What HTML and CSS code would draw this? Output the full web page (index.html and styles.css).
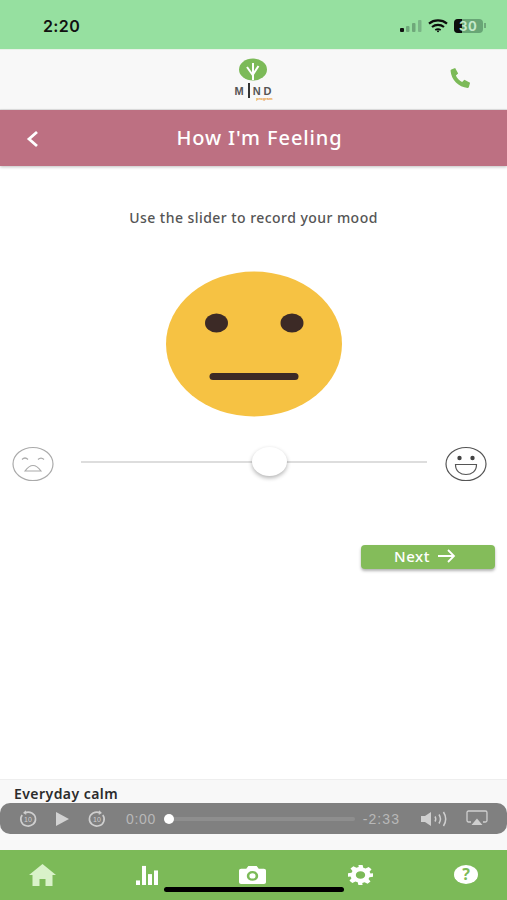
FILE: index.html
```html
<!DOCTYPE html>
<html lang="en">
<head>
    <meta charset="UTF-8">
    <meta name="viewport" content="width=device-width, initial-scale=1.0">
    <title>How I'm Feeling</title>
    <link rel="stylesheet" href="styles.css">
</head>
<body>
    <div class="status-bar">
        <span class="clock">2:20</span>
        <div class="status-icons">
            <svg width="22" height="12" viewBox="0 0 22 12">
                <rect x="0" y="8" width="4" height="4" rx="1" fill="#111"/>
                <rect x="6" y="6" width="3.500" height="6" rx="1" fill="#6fa87a"/>
                <rect x="12" y="3" width="3.500" height="9" rx="1" fill="#6fa87a"/>
                <rect x="18" y="0" width="3.500" height="12" rx="1" fill="#7ab586"/>
            </svg>
            <svg width="20" height="14" viewBox="0 0 20 14" fill="none" stroke="#0c0c0c" stroke-width="2.200">
                <path d="M1 4.600C6 .4 14 .4 19 4.600"/>
                <path d="M4 8C7.500 5.200 12.500 5.200 16 8"/>
                <path d="M7.300 11C9 9.800 11 9.800 12.700 11" stroke-width="1.800"/>
                <circle cx="10" cy="12.300" r="1" fill="#0c0c0c" stroke="none"/>
            </svg>
            <div class="battery-wrap">
                <div class="battery"><span class="battery-level"></span><span class="battery-text">30</span></div>
                <span class="battery-nub"></span>
            </div>
        </div>
    </div>

    <header class="app-bar">
        <div class="logo">
            <svg width="28" height="23" viewBox="0 0 28 23">
                <ellipse cx="14" cy="11.500" rx="14" ry="11" fill="#7cba58"/>
                <path d="M14 22V11M14 17.500L8 9M14 16.500L19.500 8M14 11V5" fill="none" stroke="#fff" stroke-width="2"/>
            </svg>
            <div class="logo-text">
                <div class="logo-word">M<span class="logo-i"></span>ND</div>
                <div class="logo-sub">program</div>
            </div>
        </div>
        <svg class="phone" width="24" height="22" viewBox="0 0 24 24">
            <path d="M2.500 2.800 6.700 1.200 10 7 7.500 9.300C8.800 12.400 11.300 15 14.300 16.400L16.800 14 23 17.200 21.700 21.800C21.500 22.500 21 22.800 20.300 22.800 10.500 22.400 2.500 14 1.700 4.200 1.700 3.500 2 3 2.500 2.800Z" fill="#7cba58"/>
        </svg>
    </header>

    <div class="title-bar">
        <svg class="back" width="13" height="18" viewBox="0 0 13 18" fill="none" stroke="#fff" stroke-width="2.800">
            <path d="M11 2 3 9l8 7"/>
        </svg>
        <h1>How I'm Feeling</h1>
    </div>

    <main>
        <p class="prompt">Use the slider to record your mood</p>

        <svg class="mood-face" width="176" height="146" viewBox="0 0 176 146">
            <ellipse cx="88" cy="73" rx="88" ry="72.500" fill="#f6c243"/>
            <ellipse cx="50.500" cy="52" rx="11.500" ry="9.500" fill="#3c2a26"/>
            <ellipse cx="126" cy="52" rx="11.500" ry="9.500" fill="#3c2a26"/>
            <rect x="43.500" y="102" width="89" height="7" rx="3.500" fill="#3c2a26"/>
        </svg>

        <div class="slider-row">
            <svg width="42" height="36" viewBox="0 0 42 36" fill="none" stroke="#aaa" stroke-width="1.200">
                <ellipse cx="21" cy="18" rx="20" ry="16.500"/>
                <path d="M10 13.500q3-3 6 0M26 13.500q3-3 6 0"/>
                <path d="M13 25q8-11 16 0z"/>
            </svg>
            <div class="slider">
                <div class="slider-track"></div>
                <div class="slider-thumb"></div>
            </div>
            <svg width="42" height="36" viewBox="0 0 42 36" fill="none" stroke="#555" stroke-width="1.200">
                <ellipse cx="21" cy="18" rx="20" ry="16.500"/>
                <circle cx="14.500" cy="12" r="2.200" fill="#444" stroke="none"/>
                <circle cx="27.500" cy="12" r="2.200" fill="#444" stroke="none"/>
                <path d="M10.500 18.500h21c0 7-5 10-10.500 10s-10.500-3-10.500-10z"/>
            </svg>
        </div>

        <div class="actions">
            <button class="next-btn" type="button">
                Next
                <svg width="19" height="14" viewBox="0 0 19 14" fill="none" stroke="#fff" stroke-width="1.800">
                    <path d="M1 7h16M11 1l6 6-6 6"/>
                </svg>
            </button>
        </div>
    </main>

    <section class="audio">
        <div class="audio-title">Everyday calm</div>
        <div class="player">
            <svg width="18" height="18" viewBox="0 0 18 18" fill="none" stroke="#cfcfcf" stroke-width="1.600">
                <path d="M6 2.800A7.400 7 0 1 1 3.200 5"/>
                <path d="M7 .8 5 2.800l2.300 1.400" stroke-width="1.200"/>
                <text x="9" y="12" class="skip-num">10</text>
            </svg>
            <svg class="play" width="15" height="16" viewBox="0 0 15 16"><path d="M1 1v14l13-7z" fill="#d2d2d2"/></svg>
            <svg width="18" height="18" viewBox="0 0 18 18" fill="none" stroke="#cfcfcf" stroke-width="1.600">
                <path d="M12 2.800A7.400 7 0 1 0 14.800 5"/>
                <path d="M11 .8 13 2.800l-2.300 1.400" stroke-width="1.200"/>
                <text x="9" y="12" class="skip-num">10</text>
            </svg>
            <span class="time time-start">0:00</span>
            <div class="progress"><span class="progress-knob"></span></div>
            <span class="time time-end">-2:33</span>
            <svg class="volume" width="28" height="16" viewBox="0 0 28 16" fill="none" stroke="#cfcfcf" stroke-width="1.500">
                <path d="M1 5h4l6-4v14l-6-4H1z" fill="#cfcfcf" stroke="none"/>
                <path d="M15 5.500q1.500 2.500 0 5M19 3.500q3 4.500 0 9M23.500 1q4.500 7 0 14"/>
            </svg>
            <svg class="airplay" width="22" height="17" viewBox="0 0 22 17" fill="none" stroke="#cfcfcf" stroke-width="1.300">
                <path d="M5 12H2.500a1.500 1.500 0 0 1-1.500-1.500V2.500A1.500 1.500 0 0 1 2.500 1h17A1.500 1.500 0 0 1 21 2.500v8a1.500 1.500 0 0 1-1.500 1.500H17"/>
                <path d="M11 8.500 16.500 15h-11z" fill="#cfcfcf" stroke="none"/>
            </svg>
        </div>
    </section>

    <nav class="tab-bar">
        <svg width="27" height="22" viewBox="0 0 27 22"><path d="M13.500 0 27 11h-3.500v11h-7v-7h-6v7h-7V11H0z" fill="#d9f2c9"/></svg>
        <svg class="tab-chart" width="22" height="20" viewBox="0 0 22 22" preserveAspectRatio="none" fill="#fff">
            <rect x="0" y="17" width="4" height="5"/><rect x="6" y="1" width="4" height="21"/>
            <rect x="12" y="10" width="4" height="12"/><rect x="18" y="6" width="4" height="16"/>
        </svg>
        <svg width="27" height="18" viewBox="0 0 26 20" preserveAspectRatio="none">
            <path fill-rule="evenodd" d="M2 3h5l2-3h8l2 3h5a2 2 0 0 1 2 2v13a2 2 0 0 1-2 2H2a2 2 0 0 1-2-2V5a2 2 0 0 1 2-2ZM13 5.500a5.500 5.500 0 1 0 0 11 5.500 5.500 0 0 0 0-11Zm0 2.500a3 3 0 1 1 0 6 3 3 0 0 1 0-6Z" fill="#fff"/>
        </svg>
        <svg width="25" height="20" viewBox="0 0 24 24" preserveAspectRatio="none">
            <path fill-rule="evenodd" d="M10 0h4l.7 3.400 2.200.9 2.900-1.900 2.800 2.800-1.900 2.900.9 2.200L24 10v4l-3.400.7-.9 2.200 1.900 2.900-2.800 2.800-2.900-1.900-2.200.9L14 24h-4l-.7-3.400-2.200-.9-2.900 1.900-2.800-2.800 1.900-2.900-.9-2.200L0 14v-4l3.400-.7.9-2.200-1.900-2.900 2.800-2.800 2.900 1.900 2.200-.9ZM12 7.500a4.500 4.500 0 1 0 0 9 4.500 4.500 0 0 0 0-9Z" fill="#fff"/>
        </svg>
        <div class="help">?</div>
    </nav>
    <div class="home-indicator"></div>
</body>
</html>
```

FILE: styles.css
```css
* {
    margin: 0;
    padding: 0;
    box-sizing: border-box;
}

body {
    width: 507px;
    height: 900px;
    overflow: hidden;
    position: relative;
    display: flex;
    flex-direction: column;
    font-family: 'Noto Sans', sans-serif;
    background-color: #fff;
    color: #333;
}

.status-bar {
    height: 49px;
    flex: none;
    background-color: #96e0a0;
    display: flex;
    justify-content: space-between;
    align-items: center;
    padding: 2px 21px 0 43px;
}

.clock {
    font-family: 'Inter', sans-serif;
    font-size: 16px;
    font-weight: 600;
    letter-spacing: 0.4px;
    color: #111;
}

.status-icons {
    display: flex;
    align-items: center;
    gap: 6px;
}

.battery-wrap {
    display: flex;
    align-items: center;
    gap: 1px;
}

.battery {
    width: 29px;
    height: 14px;
    border-radius: 4px;
    background-color: #68a676;
    position: relative;
    overflow: hidden;
}

.battery-level {
    display: block;
    width: 8px;
    height: 100%;
    background-color: #0c0c0c;
}

.battery-text {
    position: absolute;
    left: 5px;
    top: -1px;
    font-family: 'Inter', sans-serif;
    font-size: 13px;
    font-weight: 700;
    line-height: 16px;
    letter-spacing: 0.5px;
    color: #c3e9cb;
}

.battery-nub {
    width: 2px;
    height: 5px;
    background-color: #6fa87a;
}

.app-bar {
    height: 61px;
    flex: none;
    background-color: #f8f8f8;
    border-top: 1px solid #e8f2e8;
    border-bottom: 1px solid #e4e4e4;
    display: flex;
    justify-content: center;
    align-items: center;
    position: relative;
}

.logo {
    display: flex;
    flex-direction: column;
    align-items: center;
    margin-right: 2px;
    margin-top: -1px;
}

.logo-text {
    display: flex;
    flex-direction: column;
    margin-top: 5px;
    margin-left: 4px;
}

.logo-word {
    display: flex;
    align-items: center;
    font-family: 'Liberation Sans', sans-serif;
    font-size: 11px;
    font-weight: 700;
    line-height: 11px;
    letter-spacing: 3px;
    color: #555;
}

.logo-i {
    width: 2px;
    height: 15px;
    margin: -3px 3px -1px 1px;
    background-color: #333;
}

.logo-sub {
    font-family: 'Liberation Sans', sans-serif;
    font-size: 4px;
    font-weight: 700;
    line-height: 3px;
    text-align: right;
    padding-right: 2px;
    color: #e8962e;
}

.phone {
    position: absolute;
    right: 35px;
    top: 17px;
}

.title-bar {
    height: 56px;
    flex: none;
    background-color: #bd7082;
    box-shadow: 0 1px 3px rgba(0, 0, 0, 0.25);
    display: flex;
    justify-content: center;
    align-items: center;
    position: relative;
}

.title-bar h1 {
    font-size: 20px;
    font-weight: 500;
    letter-spacing: 0.9px;
    color: #fff;
    margin-left: 12px;
    margin-top: -2px;
}

.back {
    position: absolute;
    left: 26px;
    top: 20px;
}

main {
    flex: 1;
    display: flex;
    flex-direction: column;
    align-items: center;
}

.prompt {
    margin-top: 42px;
    font-size: 14px;
    font-weight: 500;
    line-height: 19px;
    letter-spacing: 0.45px;
    color: #555;
}

.mood-face {
    margin-top: 44px;
}

.slider-row {
    width: 100%;
    margin-top: 29px;
    padding: 0 20px 0 12px;
    display: flex;
    align-items: center;
    justify-content: space-between;
}

.slider {
    width: 346px;
    height: 36px;
    position: relative;
    margin-top: -2px;
    margin-left: 9px;
}

.slider-track {
    position: absolute;
    left: 0;
    right: 0;
    top: 16px;
    height: 2px;
    background-color: #ddd;
}

.slider-thumb {
    position: absolute;
    left: 171px;
    top: 2px;
    width: 35px;
    height: 29px;
    border-radius: 50%;
    background-color: #fff;
    box-shadow: 0 2px 4px rgba(0, 0, 0, 0.3);
}

.actions {
    width: 100%;
    margin-top: 63px;
    padding-right: 12px;
    display: flex;
    justify-content: flex-end;
}

.next-btn {
    width: 134px;
    height: 24px;
    border: none;
    border-radius: 4px;
    background-color: #84bc5a;
    box-shadow: 0 2px 3px rgba(0, 0, 0, 0.3);
    color: #fff;
    font-family: 'Noto Sans', sans-serif;
    font-size: 15px;
    font-weight: 500;
    letter-spacing: 0.5px;
    display: flex;
    align-items: center;
    justify-content: center;
    gap: 7px;
    padding: 0 6px 2px 0;
}

.audio {
    height: 71px;
    flex: none;
    background-color: #f8f8f8;
    border-top: 1px solid #eee;
}

.audio-title {
    height: 23px;
    padding-left: 14px;
    font-size: 14px;
    font-weight: 600;
    line-height: 27px;
    letter-spacing: 0.45px;
    color: #2c2c2c;
}

.player {
    height: 31px;
    border-radius: 10px;
    background-color: #808080;
    display: flex;
    align-items: center;
    padding: 0 19px;
    color: #b8b8b8;
}

.skip-num {
    font-family: 'Liberation Sans', sans-serif;
    font-size: 7px;
    text-anchor: middle;
    fill: #cfcfcf;
    stroke: none;
}

.play {
    margin: 0 18px;
}

.time {
    font-family: 'Liberation Sans', sans-serif;
    font-size: 14px;
    flex: none;
}

.time-start {
    margin-left: 20px;
    letter-spacing: 0.7px;
}

.time-end {
    letter-spacing: 1.100px;
}

.progress {
    width: 191px;
    height: 4px;
    margin: 0 8px 0 8px;
    border-radius: 2px;
    background-color: #8e8e8e;
    position: relative;
}

.progress-knob {
    position: absolute;
    left: 0;
    top: -3px;
    width: 10px;
    height: 10px;
    border-radius: 50%;
    background-color: #fff;
}

.volume {
    margin-left: 20px;
}

.airplay {
    margin-left: 18px;
}

.tab-bar {
    height: 50px;
    flex: none;
    background-color: #7cba58;
    display: flex;
    justify-content: space-between;
    align-items: center;
    padding: 0 29px 1px 29px;
}

.tab-chart {
    margin-left: -2px;
}

.help {
    width: 24px;
    height: 19px;
    border-radius: 50%;
    background-color: #fff;
    color: #7cba58;
    font-size: 16px;
    font-weight: 700;
    line-height: 19px;
    text-align: center;
}

.home-indicator {
    position: absolute;
    left: 164px;
    top: 887px;
    width: 180px;
    height: 5px;
    border-radius: 3px;
    background-color: #000;
}
```
